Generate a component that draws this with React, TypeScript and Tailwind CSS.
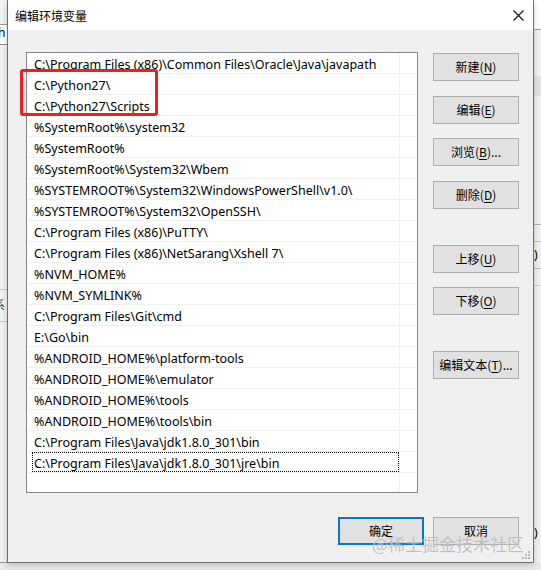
const rows = [
  "C:\\Program Files (x86)\\Common Files\\Oracle\\Java\\javapath",
  "C:\\Python27\\",
  "C:\\Python27\\Scripts",
  "%SystemRoot%\\system32",
  "%SystemRoot%",
  "%SystemRoot%\\System32\\Wbem",
  "%SYSTEMROOT%\\System32\\WindowsPowerShell\\v1.0\\",
  "%SYSTEMROOT%\\System32\\OpenSSH\\",
  "C:\\Program Files (x86)\\PuTTY\\",
  "C:\\Program Files (x86)\\NetSarang\\Xshell 7\\",
  "%NVM_HOME%",
  "%NVM_SYMLINK%",
  "C:\\Program Files\\Git\\cmd",
  "E:\\Go\\bin",
  "%ANDROID_HOME%\\platform-tools",
  "%ANDROID_HOME%\\emulator",
  "%ANDROID_HOME%\\tools",
  "%ANDROID_HOME%\\tools\\bin",
  "C:\\Program Files\\Java\\jdk1.8.0_301\\bin",
  "C:\\Program Files\\Java\\jdk1.8.0_301\\jre\\bin",
];

function Btn({ label, k, tail = "", className = "" }: { label: string; k?: string; tail?: string; className?: string }) {
  return (
    <div
      className={`flex h-[28px] w-[86px] items-center justify-center border border-[#adadad] bg-[#e1e1e1] ${className}`}
    >
      {label}
      {k && (
        <>
          (<span className="underline underline-offset-[2px]">{k}</span>)
        </>
      )}
      {tail}
    </div>
  );
}

export default function App() {
  return (
    <div className="relative flex h-[570px] w-[541px] overflow-hidden bg-[#e8e8e8] font-['Noto_Sans','Noto_Sans_CJK_SC',sans-serif] text-[12px] text-black">
      {/* desktop behind, left */}
      <div className="flex h-[563px] w-[7px] flex-col bg-[#f3f3f3]">
        <div className="h-[25px] border-b border-[#9a9a9a]" />
        <div className="h-[20px] overflow-hidden border-b border-[#8a8a8a] bg-white text-[12px] leading-[16px]">
          <span className="-ml-[2px]">h</span>
        </div>
        <div className="h-[244px]" />
        <div className="h-[33px] overflow-hidden border-y border-[#c8c8c8] text-[12px] leading-[31px] text-[#333]">
          <span className="-ml-[7px]">系</span>
        </div>
        <div className="flex-1 border-b border-[#9a9a9a]" />
      </div>

      {/* dialog */}
      <div className="relative flex h-[563px] w-[527px] flex-col border-x border-b border-[#6f6f6f] bg-[#f0f0f0] shadow-[0_2px_6px_rgba(0,0,0,0.2)]">
        <div className="flex h-[30px] items-center justify-between bg-white pl-[7px] pr-[9px] font-['Noto_Sans_CJK_SC',sans-serif]">
          <span className="pt-[1px]">编辑环境变量</span>
          <svg width="11" height="11" viewBox="0 0 11 11" className="mt-[1px]">
            <path d="M0.5 0.5 L10.5 10.5 M10.5 0.5 L0.5 10.5" stroke="#111" strokeWidth="1.1" />
          </svg>
        </div>

        <div className="flex flex-1 flex-col pl-[18px] pt-[22px]">
          <div className="flex">
            {/* list */}
            <div className="flex h-[441px] w-[392px] flex-col border border-[#828790] bg-white text-[12.5px]">
              {rows.map((r, i) => (
                <div key={i} className="flex h-[21px] shrink-0 border-b border-[#f0f0f0]">
                  <div className="h-full w-[373px] border-r border-[#f0f0f0] pl-[5px]">
                    <div
                      className={`flex h-full items-center whitespace-nowrap pl-[1px] pt-[5px] ${
                        i === rows.length - 1 ? "border border-dotted border-black" : "border border-transparent"
                      }`}
                    >
                      {r}
                    </div>
                  </div>
                </div>
              ))}
              <div className="flex flex-1">
                <div className="h-full w-[373px] border-r border-[#f0f0f0]" />
              </div>
            </div>

            {/* buttons */}
            <div className="ml-[15px] mt-[1px] flex flex-col font-['Noto_Sans_CJK_SC',sans-serif]">
              <Btn label="新建" k="N" />
              <Btn label="编辑" k="E" className="mt-[15px]" />
              <Btn label="浏览" k="B" tail="..." className="mt-[14px]" />
              <Btn label="删除" k="D" className="mt-[15px]" />
              <Btn label="上移" k="U" className="mt-[36px]" />
              <Btn label="下移" k="O" className="mt-[14px]" />
              <Btn label="编辑文本" k="T" tail="..." className="mt-[36px]" />
            </div>
          </div>

          <div className="mt-[24px] flex justify-end gap-[9px] pr-[14px] font-['Noto_Sans_CJK_SC',sans-serif]">
            <div className="flex h-[28px] w-[86px] items-center justify-center border-2 border-[#0078d7] bg-[#e1e1e1]">
              确定
            </div>
            <Btn label="取消" />
          </div>
        </div>

        {/* resize grip */}
        <svg width="10" height="10" viewBox="0 0 10 10" className="absolute bottom-[2px] right-[2px]">
          <rect x="7" y="1" width="2" height="2" fill="#b8b8b8" />
          <rect x="4" y="4" width="2" height="2" fill="#b8b8b8" />
          <rect x="7" y="4" width="2" height="2" fill="#b8b8b8" />
          <rect x="1" y="7" width="2" height="2" fill="#b8b8b8" />
          <rect x="4" y="7" width="2" height="2" fill="#b8b8b8" />
          <rect x="7" y="7" width="2" height="2" fill="#b8b8b8" />
        </svg>
      </div>

      {/* desktop behind, right */}
      <div className="flex h-[563px] flex-1 flex-col bg-[#f0f0f0]">
        <div className="h-[30px] border-b border-[#a0a0a0] bg-white" />
        <div className="h-[46px]" />
        <div className="h-[20px] bg-[#e3e3e3]" />
        <div className="h-[128px]" />
        <div className="h-[17px] border-t border-[#b0b0b0]" />
        <div className="h-[28px] overflow-hidden border-y border-[#c0c0c0] text-[12px] leading-[26px]">
          <span>)</span>
        </div>
        <div className="h-[17px] border-b border-[#d0d0d0]" />
        <div className="flex-1" />
        <div className="h-[40px] overflow-hidden text-[12px] leading-[20px]">
          <span>)</span>
        </div>
      </div>

      {/* annotation */}
      <div className="absolute left-[20px] top-[69px] h-[47px] w-[138px] rounded-[3px] border-[3px] border-[#f41c1c]" />

      {/* watermark */}
      <div className="absolute left-[372px] top-[533px] font-['Noto_Sans_CJK_SC',sans-serif] text-[17px] leading-[22px] text-[rgba(140,140,140,0.55)] [text-shadow:0_0_1px_rgba(255,255,255,0.8)]">
        @稀土掘金技术社区
      </div>
    </div>
  );
}
